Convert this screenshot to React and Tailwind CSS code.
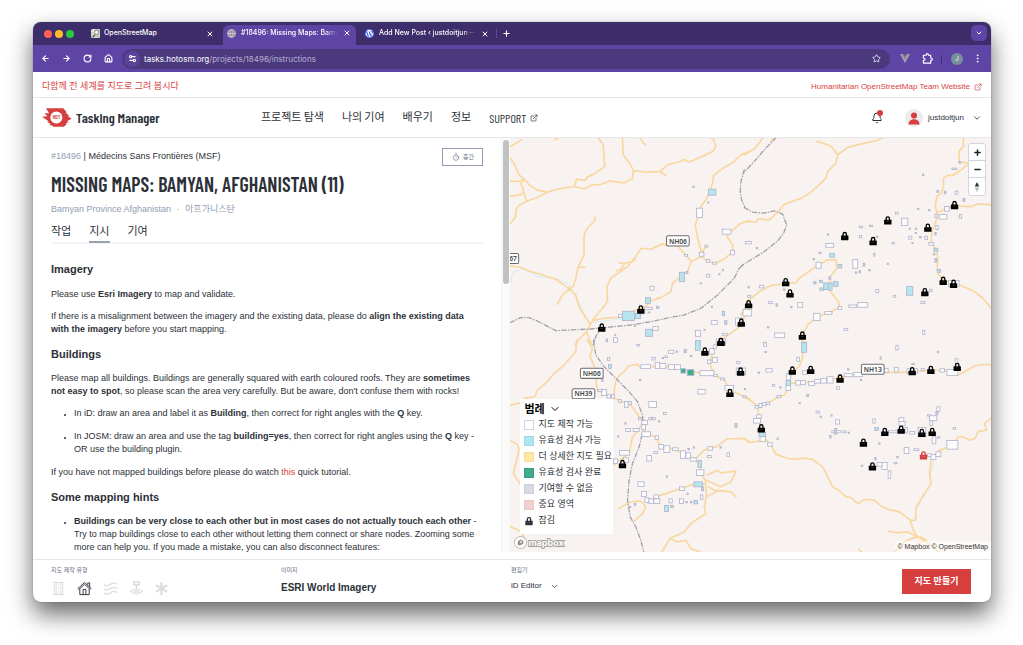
import { useState } from 'react';
import {
    ArrowLeft, ArrowRight, Bell, ChevronDown, EllipsisVertical, ExternalLink,
    Globe, House, Minus, Plus, RotateCw, Settings2, Star, Timer, X,
} from 'lucide-react';
import { FaAsterisk, FaWordpress } from 'react-icons/fa';

const BODY = 'font-["Liberation_Sans","Noto_Sans_CJK_KR",sans-serif]';
const CONDENSED = 'font-["Barlow_Condensed","Liberation_Sans_Narrow","Noto_Sans_CJK_KR",sans-serif]';
const BROWSER = 'font-[Inter,"Noto_Sans_CJK_KR",sans-serif]';

const LEGEND = [
    { label: '지도 제작 가능', swatch: 'bg-white border-gray-300' },
    { label: '유효성 검사 가능', swatch: 'bg-[#ade6ef] border-[#9fd8e3]' },
    { label: '더 상세한 지도 필요', swatch: 'bg-[#ffe8a0] border-[#f3dc94]' },
    { label: '유효성 검사 완료', swatch: 'bg-[#40ac8c] border-[#3a9c80]' },
    { label: '기여할 수 없음', swatch: 'bg-[#d8dae4] border-[#ccceda]' },
    { label: '중요 영역', swatch: 'bg-[#f0d1d0] border-[#e8c6c5]' },
];

// The map is drawn in four tiles, each with its own offset on the canvas.
// boxes: x, y, w, h, then b = ready for validation, g = finished
const TILES = [
    {
        dx: -18,
        dy: -9,
        water: 'M18 445L30 410L60 402L100 425L150 430L190 445L210 475L228 510L245 550M270 562L340 553L400 545L440 530',
        roads: [
            'M18 36L35 26L52 16M152 16L163 9M408 9L414 20L424 30',
            'M283 9L297 30L299 60L302 95L270 118L250 126L245 137L218 133L210 155',
            'M355 9L357 60L378 88L388 108L384 132L360 144L340 142L318 138L290 149L265 150L240 162L210 155L165 162L130 172L100 188L66 200L45 212L36 225L35 245L20 265',
            'M18 68L32 90L45 120L62 134L75 150L100 166L130 172M18 138L40 140L62 134L50 147L55 155L60 175L68 200M18 184L50 180L58 170',
            'M388 108L430 112L468 110L485 122M468 110L490 90L530 80L540 74L555 82L600 62L625 50L635 35L628 15L620 9',
            'M735 50L710 60L690 80L660 98L628 122L625 145L618 165L608 190L590 215L580 250L573 270L580 310L592 350L592 365',
            'M735 257L710 265L680 290L668 305L685 330L684 352L660 372L632 386L610 378L592 365L561 380M592 355L606 334',
            'M521 335L545 360L561 380L550 410L505 445L500 470L470 488L440 497L425 515',
            'M490 333L475 327L440 343L412 340L398 360L390 378L362 385L345 384M362 385L350 403L338 408M390 370L370 395L320 430L309 455L310 500L295 520L270 550L258 570',
            'M274 247L270 260L250 280L240 300L240 360L222 397L215 430L208 453L196 462L175 480L160 508M222 397L243 397',
            'M18 393L50 397L70 407L110 418L155 433L196 462L215 480L220 500L230 525L250 555L258 570L248 590L225 612L213 630M248 590L256 615L265 630',
            'M265 557L300 550L350 546L395 525L425 515M735 520L700 580L655 612L650 630',
        ],
        borders: 'M18 563L50 548L75 548L100 558L155 587L260 582L380 570L440 560L500 547L540 540L590 520L640 480L670 450L690 430L705 400L720 387M720 105L710 140L708 170L712 195L722 218M292 575L275 605L268 630',
        boxes: [
            [613, 163, 22, 18, 'b'], [577, 220, 18, 28], [654, 283, 26, 15], [585, 352, 14, 12], [679, 346, 12, 14],
            [607, 374, 10, 8], [625, 382, 11, 6], [541, 359, 9, 5], [602, 331, 9, 6], [526, 412, 15, 28, 'b'],
            [437, 454, 12, 12], [424, 488, 15, 17, 'b'], [355, 529, 36, 28, 'b'], [394, 535, 15, 16, 'b'], [343, 538, 11, 9],
            [420, 517, 25, 7], [457, 514, 7, 6, 'b'], [424, 583, 21, 21, 'b'], [446, 575, 17, 11], [574, 586, 15, 18],
            [575, 617, 14, 13, 'b'], [607, 418, 10, 8], [621, 557, 18, 11], [654, 529, 7, 13, 'b'], [661, 557, 7, 11, 'b'],
            [655, 595, 14, 6], [694, 549, 18, 22], [636, 612, 28, 17], [328, 608, 12, 14], [306, 612, 4, 8], [566, 154, 4, 4],
            [611, 201, 3, 4], [644, 416, 3, 4], [655, 404, 3, 4], [588, 444, 4, 3], [546, 410, 5, 6], [391, 571, 3, 4],
            [432, 531, 5, 3], [621, 514, 4, 3], [599, 583, 4, 3], [332, 598, 3, 4],
        ],
        locks: [[410, 523], [293, 577], [711, 562], [650, 620]],
    },
    {
        dx: 702,
        dy: -9,
        water: '',
        roads: [
            'M0 60L30 42L45 25L55 9M80 20L90 9',
            'M218 20L245 28L262 37L280 60L275 85L250 110L245 130L222 152L200 172L172 190L120 208L100 232L75 255L40 252L35 262L15 260L0 262',
            'M280 60L310 38L360 25L395 18L415 9',
            'M656 9L657 35L643 50L645 82L672 85M680 82L650 105L625 122L610 122L597 130L597 155L590 175L577 185L572 212L580 245L562 290L560 320L575 345L580 370L578 400L582 420L596 435L645 450L690 470L715 490L740 520',
            'M580 232L605 222L630 212L680 216L700 207L740 210',
            'M-10 540L15 495L45 470L80 452L125 445L155 443L165 430L222 390L250 375L275 375L277 400L258 425L258 470L282 500L285 518L250 535L218 545L190 570L175 600L174 640',
        ],
        borders: 'M95 9L60 45L30 80L0 112M0 218L25 232L60 235L90 228L115 238L127 270L118 295L100 318L60 350L-8 392',
        boxes: [
            [471, 250, 19, 22], [453, 232, 8, 6], [345, 274, 9, 5], [375, 271, 9, 4], [345, 302, 7, 7], [442, 322, 8, 5],
            [244, 326, 24, 11], [256, 356, 14, 11, 'b'], [215, 382, 15, 18], [281, 389, 11, 10, 'b'], [325, 374, 15, 26],
            [356, 385, 5, 9], [388, 355, 3, 9], [267, 440, 14, 14, 'b'], [238, 444, 13, 20, 'b'], [253, 444, 10, 22, 'b'],
            [225, 436, 9, 7, 'b'], [208, 440, 7, 7, 'b'], [226, 459, 12, 7, 'b'], [253, 426, 6, 7, 'b'], [281, 515, 11, 8],
            [313, 510, 24, 7], [340, 503, 30, 14], [241, 530, 22, 8], [208, 535, 19, 22], [160, 503, 15, 14], [73, 500, 11, 6],
            [95, 506, 4, 8], [91, 594, 30, 14], [46, 451, 12, 8], [10, 481, 9, 6], [-4, 524, 26, 19], [3, 320, 18, 7],
            [486, 455, 19, 26, 'b'], [555, 463, 8, 6], [394, 464, 9, 9], [446, 481, 8, 6], [529, 500, 12, 6], [534, 586, 7, 12],
            [299, 580, 11, 6], [612, 437, 32, 17], [584, 239, 23, 14], [600, 215, 14, 14], [644, 239, 7, 11], [655, 191, 6, 9],
            [632, 169, 8, 9], [599, 169, 5, 8], [622, 100, 15, 4], [577, 167, 5, 6], [571, 238, 7, 10], [574, 272, 7, 12],
            [553, 323, 14, 8], [541, 304, 8, 10], [493, 304, 9, 9], [568, 340, 12, 9, 'b'], [571, 371, 6, 11], [578, 404, 10, 8, 'b'],
            [571, 293, 4, 7], [172, 622, 14, 10, 'b'], [58, 622, 7, 8], [534, 118, 4, 4], [643, 80, 5, 5], [519, 221, 4, 3],
            [552, 224, 4, 4], [494, 280, 4, 3], [512, 280, 4, 4], [512, 293, 4, 3], [525, 305, 5, 4], [502, 323, 4, 3],
            [249, 297, 4, 4], [224, 352, 6, 4], [206, 371, 4, 4], [333, 411, 4, 4], [344, 407, 4, 7], [373, 404, 4, 4],
            [428, 385, 4, 4], [117, 462, 5, 4], [139, 514, 4, 4], [36, 338, 4, 4], [11, 455, 4, 4], [69, 575, 5, 4], [395, 304, 5, 4], [567, 356, 4, 4],
        ],
        locks: [[430, 256], [301, 303], [386, 318], [630, 210], [550, 278], [124, 441], [137, 475], [13, 507], [541, 471], [596, 437], [627, 446], [174, 601]],
    },
    {
        dx: -18,
        dy: 606,
        water: '',
        roads: [
            'M218 0L215 35L180 75L148 103L125 130L100 150L93 170L60 175M18 195L50 188M18 300L42 315L45 330L38 360L28 400L48 430M18 558L48 572L60 590',
            'M250 0L265 25L258 50L272 82L275 105L278 145L298 160L325 172L350 182L380 195L405 230L420 240L422 275L455 292L470 318L500 325L540 340L572 358L588 375L590 400L603 420L607 465L600 500L605 520L560 550L540 575L497 595L485 615L470 640',
            'M328 168L335 125L345 107L360 95L372 78L385 75L400 73L405 80L430 80L520 80L540 92L600 100L630 105L660 120L678 150L700 160L735 175',
            'M420 240L400 275L385 290L375 340L340 365L330 375M572 358L600 330L640 318L668 296L690 296L720 295L735 305',
            'M607 405L640 390L650 398L695 393L680 425L650 440L605 420M612 440L630 450L660 453L680 455L695 470M607 470L645 450',
            'M343 505L380 485L410 483L425 500L415 520L390 543M430 487L455 470L500 455L560 435L600 432',
            'M497 595L520 605L545 600L560 625L590 636M630 105L618 75L625 30L650 5',
        ],
        borders: 'M268 0L275 45L300 80L340 120L375 155L400 185L415 225L418 265L405 320L385 370L375 420L370 480L378 530L395 560L410 600L420 640',
        boxes: [
            [574, 2, 14, 29, 'b'], [493, 31, 16, 9], [410, 74, 29, 11], [453, 67, 14, 18], [467, 70, 18, 15], [493, 74, 18, 14],
            [511, 74, 18, 14], [530, 86, 14, 13, 'g'], [549, 89, 20, 17, 'g'], [587, 92, 42, 15], [662, 136, 26, 14], [581, 148, 22, 14],
            [434, 184, 23, 18], [292, 148, 15, 18], [309, 164, 10, 10], [322, 164, 9, 10], [344, 178, 7, 9], [361, 184, 11, 18],
            [374, 184, 8, 10], [413, 241, 17, 12], [413, 253, 11, 15], [387, 265, 18, 9], [365, 265, 14, 9], [413, 275, 26, 14],
            [453, 287, 10, 11], [464, 313, 14, 14], [479, 317, 18, 20], [505, 323, 17, 8], [529, 332, 15, 23], [545, 338, 14, 17],
            [428, 346, 14, 17], [346, 331, 30, 14], [358, 353, 15, 14], [328, 356, 12, 14], [611, 320, 14, 10], [610, 346, 11, 6],
            [668, 338, 8, 11], [581, 361, 11, 21, 'b'], [577, 389, 22, 17], [569, 425, 26, 15, 'b'], [401, 425, 19, 14], [412, 454, 15, 15],
            [449, 464, 14, 11], [434, 476, 14, 14], [449, 476, 18, 14], [422, 473, 12, 14], [526, 440, 15, 11], [589, 464, 7, 14],
            [592, 440, 6, 12], [569, 481, 11, 10, 'b'], [526, 476, 12, 14], [481, 496, 12, 18, 'b'], [499, 496, 9, 6, 'b'], [313, 73, 9, 12, 'b'],
            [310, 52, 7, 9], [625, 52, 14, 15], [616, 26, 14, 16], [628, 14, 8, 12], [610, 60, 10, 10], [540, 28, 6, 10], [443, 52, 10, 8],
            [697, 64, 10, 6], [692, 250, 6, 12], [478, 217, 8, 6], [434, 232, 8, 7], [445, 232, 8, 7], [403, 232, 8, 7], [449, 334, 11, 6],
            [551, 325, 5, 4], [494, 476, 10, 12], [558, 353, 18, 10], [649, 114, 12, 6], [628, 104, 12, 6], [716, 167, 9, 6], [696, 84, 28, 20],
            [406, 118, 4, 4], [293, 112, 4, 12], [482, 48, 8, 5], [474, 52, 4, 4], [398, 13, 8, 5], [516, 33, 4, 4], [559, 46, 4, 4],
            [362, 248, 4, 4], [340, 287, 4, 4], [463, 242, 4, 4], [486, 407, 4, 4], [548, 459, 4, 4], [545, 484, 4, 4], [559, 484, 4, 4],
            [567, 320, 4, 4], [647, 320, 4, 4], [376, 498, 4, 4], [280, 148, 14, 6], [720, 145, 4, 4], [390, 490, 5, 5],
        ],
        locks: [[602, 34], [650, 5], [709, 94], [677, 158], [355, 371]],
    },
    {
        dx: 702,
        dy: 606,
        water: 'M568 362L563 385L556 410L560 430L545 455L530 480L520 500',
        roads: [
            'M175 0L175 50L165 80L140 100L135 140L120 165L100 172L70 190L40 200L20 182L0 170',
            'M135 130L220 125L290 112L350 98L440 97L500 97L560 90L620 93L640 105L660 95L690 78L705 74L740 74',
            'M40 200L45 240L48 270L60 295L78 312L95 342L130 355L155 357L180 354L205 358L235 380L265 440L285 452L305 470L320 472L340 490L360 478L390 480L410 498L430 507L465 515L497 540L505 565L515 585L545 605L585 636',
            'M0 295L15 307L45 303L60 295M497 540L513 540L515 500L540 460L560 430L555 400L560 360L585 330L630 315L640 290L655 290L675 300L692 295L700 275L725 270L720 250L740 235',
            'M433 573L455 577L490 575L520 590L500 595L480 605L450 636M530 590L545 600L520 610L500 636M344 627L352 636',
        ],
        borders: '',
        boxes: [
            [172, 8, 15, 29, 'b'], [157, 52, 8, 12], [65, 86, 19, 10], [58, 8, 8, 11], [175, 92, 12, 11], [125, 121, 14, 15, 'b'],
            [127, 100, 12, 20], [125, 137, 14, 14], [154, 121, 15, 14], [169, 121, 14, 12], [193, 124, 18, 12], [211, 118, 18, 11],
            [229, 115, 18, 14], [248, 110, 18, 19], [299, 101, 26, 9], [328, 97, 26, 13], [416, 86, 15, 11], [450, 82, 11, 14],
            [488, 86, 31, 14], [530, 85, 9, 6], [586, 86, 14, 10], [607, 88, 33, 18], [632, 56, 8, 14], [454, 16, 7, 14], [407, 50, 3, 8],
            [84, 133, 7, 6], [187, 163, 6, 6], [98, 166, 11, 7], [66, 186, 10, 8], [55, 188, 10, 8], [44, 190, 9, 12], [32, 196, 10, 8],
            [37, 224, 14, 10], [28, 235, 21, 14], [44, 277, 20, 12, 'b'], [47, 290, 17, 14], [70, 308, 14, 10], [215, 213, 11, 6],
            [274, 239, 11, 13], [262, 272, 9, 6], [271, 265, 6, 17], [277, 272, 12, 6], [295, 272, 9, 6], [277, 140, 8, 8], [385, 236, 7, 13],
            [391, 262, 11, 9, 'b'], [432, 272, 28, 6], [463, 233, 15, 11], [464, 244, 18, 12], [482, 262, 7, 16], [496, 274, 15, 8],
            [521, 262, 23, 28], [555, 227, 22, 15], [577, 200, 9, 14], [574, 214, 6, 10], [556, 242, 8, 14], [563, 290, 11, 21],
            [607, 301, 33, 26], [559, 343, 15, 15], [574, 335, 15, 14], [548, 341, 12, 8], [479, 322, 14, 18], [508, 326, 15, 5],
            [412, 367, 16, 21], [398, 367, 15, 11], [431, 392, 8, 23], [626, 262, 7, 6], [391, 352, 4, 7], [449, 367, 8, 4],
            [256, 286, 4, 8], [578, 290, 8, 4], [549, 224, 8, 4], [62, 34, 4, 4], [41, 96, 5, 4], [98, 294, 4, 4], [106, 140, 4, 4],
            [164, 188, 4, 3], [227, 228, 4, 4], [260, 224, 3, 4], [311, 276, 4, 4], [348, 118, 4, 4], [309, 86, 5, 4], [403, 308, 4, 4],
            [457, 349, 4, 4], [351, 375, 4, 4], [578, 34, 4, 4], [502, 70, 7, 4],
        ],
        locks: [[144, 91], [199, 89], [287, 115], [503, 93], [559, 89], [638, 80], [51, 264], [421, 275], [470, 268], [532, 278], [563, 275], [357, 307], [384, 378], [537, 345, 'mine']],
    },
];

const ROUTES = [
    { label: 'NH06', x: 503, y: 309 },
    { label: '67', x: 9, y: 362 },
    { label: 'NH06', x: 245, y: 706 },
    { label: 'NH39', x: 220, y: 767 },
    { label: 'NH13', x: 1087, y: 694 },
];

const BOX_FILL = { b: '#b5e5ee', g: '#40ac8c' };

const Lock = ({ x, y, color = '#000' }) => (
    <g transform={`translate(${x} ${y})`}>
        <path d="M-5 1v-6a5 5 0 0 1 10 0v6" fill="none" stroke={color} strokeWidth="4" />
        <rect x="-11" y="-1" width="22" height="14" rx="1" fill={color} />
        <path d="M-4 4h8" stroke="#fff" strokeWidth="1" opacity=".5" />
    </g>
);

const MapCanvas = () => (
    <svg viewBox="0 0 1440 1242" preserveAspectRatio="xMidYMid slice" className="absolute inset-0 h-full w-full" aria-hidden="true">
        <rect width="1440" height="1242" fill="#f8f3f1" />
        {TILES.map((tile, i) => (
            <g key={i} transform={`translate(${tile.dx} ${tile.dy})`} fill="none" strokeLinejoin="round" strokeLinecap="round">
                <path d={tile.water} stroke="#dbe8ef" strokeWidth="3" />
                <path d={tile.roads.join('')} stroke="#f8d7a0" strokeWidth="5" />
                <path d={tile.borders} stroke="#a3a2ab" strokeWidth="4" strokeDasharray="13 7 1 7" />
            </g>
        ))}
        {TILES.map((tile, i) => (
            <g key={i} transform={`translate(${tile.dx} ${tile.dy})`}>
                {tile.boxes.map(([x, y, w, h, kind], j) => (
                    <rect key={j} x={x} y={y} width={w} height={h} fill={BOX_FILL[kind] || (w > 6 ? '#fdfcfd' : '#cfd2e2')} stroke="#b1b4cd" strokeWidth="2.5" />
                ))}
            </g>
        ))}
        {ROUTES.map(({ label, x, y }) => (
            <g key={`${label}-${x}`}>
                <rect x={x - label.length * 8.5} y={y - 15} width={label.length * 17} height="30" rx="5" fill="#fff" stroke="#6b6b70" strokeWidth="3" />
                <text x={x} y={y + 8} textAnchor="middle" fontFamily="Noto Sans, sans-serif" fontWeight="600" fontSize="20" fill="#3c3c40">{label}</text>
            </g>
        ))}
        {TILES.map((tile, i) => (
            <g key={i} transform={`translate(${tile.dx} ${tile.dy})`}>
                {tile.locks.map(([x, y, mine]) => (
                    <Lock key={`${x}-${y}`} x={x} y={y} color={mine ? '#d73f3f' : '#000'} />
                ))}
            </g>
        ))}
    </svg>
);

const HotLogo = () => (
    <svg viewBox="0 0 90 56" className="h-[19px] w-[30px] shrink-0" aria-hidden="true">
        <path d="M12 0h52l10 12-3 2 10 8-3 2 11 8-14 7 5 3-9 4 3 3-9 7H34l-5-5h-6l2-4-10-6 5-2L0 26l16-2-9-9h14z" fill="#d73f3f" />
        <circle cx="43" cy="28" r="18" fill="#fff" />
        <text x="43" y="34" textAnchor="middle" fontFamily="Barlow Condensed, Liberation Sans Narrow, sans-serif" fontWeight="600" fontSize="17" fill="#d73f3f">HOT</text>
    </svg>
);

const MapFavicon = () => (
    <svg viewBox="0 0 16 16" className="size-[9px] shrink-0" aria-hidden="true">
        <rect width="16" height="16" rx="2" fill="#c9d3bb" />
        <path d="M0 5L9 3L16 9M3 16L9 3M5 0v16" stroke="#f2efe6" strokeWidth="2" fill="none" />
        <circle cx="10" cy="6" r="4" fill="#eef1f5" stroke="#73777e" strokeWidth="1.5" />
        <path d="M7 10l-4 5" stroke="#3d3d3d" strokeWidth="2" />
    </svg>
);

const ExtensionsIcon = () => (
    <svg viewBox="0 0 24 24" className="size-[11px]" fill="none" stroke="currentColor" strokeWidth="2.5" strokeLinejoin="round" aria-hidden="true">
        <path d="M3 5h6V4a2.500 2.500 0 0 1 5 0v1h5v6h1a2.500 2.500 0 0 1 0 5h-1v6H3v-6h1a2.500 2.500 0 0 0 0-5H3z" />
    </svg>
);

const BrowserTabs = () => (
    <div className="flex h-[23px] items-end bg-[#3e2d6b] pr-1 text-[7px] font-medium text-white">
        <div className="flex h-full w-[58px] items-center gap-[3px] pl-[11px]">
            <span className="size-2 rounded-full bg-[#fe5f57]" />
            <span className="size-2 rounded-full bg-[#febb2e]" />
            <span className="size-2 rounded-full bg-[#28c840]" />
        </div>
        <div className="flex h-full w-[132px] items-center gap-1 pr-[9px]">
            <MapFavicon />
            <span className="flex-1 truncate">OpenStreetMap</span>
            <button type="button" aria-label="Close tab"><X strokeWidth={3} className="size-2" /></button>
        </div>
        <div className="flex h-5 w-[133px] items-center gap-[5px] rounded-t-md bg-[#5e44a5] pr-[5px] pb-1 pl-1">
            <Globe className="size-[9px] shrink-0 rounded-full bg-[#8c8797] text-[#d4d0dc]" />
            <span className="flex-1 overflow-hidden mask-r-from-85% whitespace-nowrap">#18496: Missing Maps: Bamyan</span>
            <button type="button" aria-label="Close tab"><X strokeWidth={3} className="size-2" /></button>
        </div>
        <div className="flex h-full w-[140px] items-center gap-[5px] pr-[7px] pl-[9px]">
            <FaWordpress className="size-[9px] shrink-0 rounded-full bg-[#3858e9]" />
            <span className="flex-1 overflow-hidden mask-r-from-85% whitespace-nowrap">Add New Post ‹ justdoitjun —</span>
            <button type="button" aria-label="Close tab"><X strokeWidth={3} className="size-2" /></button>
        </div>
        <div className="flex h-full items-center gap-[5px]">
            <span className="h-[9px] w-px bg-[#5e44a5]" />
            <button type="button" aria-label="New tab"><Plus strokeWidth={3} className="size-[9px]" /></button>
        </div>
        <button type="button" aria-label="Search tabs" className="mb-1 ml-auto flex size-4 items-center justify-center rounded-[5px] bg-[#5e44a5]">
            <ChevronDown strokeWidth={3} className="size-2" />
        </button>
    </div>
);

const BrowserToolbar = () => (
    <div className="flex h-[27px] items-center bg-[#5e44a5] pr-2 pl-2 text-white">
        <div className="flex w-[81px] items-center gap-3">
            <button type="button" aria-label="Back"><ArrowLeft strokeWidth={3} className="size-[9px]" /></button>
            <button type="button" aria-label="Forward"><ArrowRight strokeWidth={3} className="size-[9px]" /></button>
            <button type="button" aria-label="Reload"><RotateCw strokeWidth={3} className="size-[9px]" /></button>
            <button type="button" aria-label="Home"><House strokeWidth={3} className="size-[9px]" /></button>
        </div>
        <div className="flex h-5 flex-1 items-center gap-1 rounded-full bg-[#4b397e] pr-[9px] pl-[2px]">
            <button type="button" aria-label="Site information" className="flex size-4 items-center justify-center rounded-full bg-[#5a4499]">
                <Settings2 strokeWidth={3} className="size-[9px]" />
            </button>
            <div className="flex-1 text-[8px] text-[#b9b0d0]">
                <span className="text-white">tasks.hotosm.org</span>/projects/18496/instructions
            </div>
            <button type="button" aria-label="Bookmark"><Star className="size-[9px]" /></button>
        </div>
        <div className="ml-[10px] flex items-center">
            <svg viewBox="0 0 20 18" className="h-[9px] w-[10px]" aria-hidden="true">
                <path d="M0 0h7l3 6 3-6h7L10 18z" fill="#a6a3ac" />
                <path d="M4 0h3l3 6 3-6h3l-6 11z" fill="#858190" />
            </svg>
            <button type="button" aria-label="Extensions" className="ml-3"><ExtensionsIcon /></button>
            <span className="ml-2 h-2 w-px bg-[#3e2d6b]" />
            <span className="ml-[9px] flex size-3 items-center justify-center rounded-full bg-[#78909c] text-[6px]">J</span>
            <button type="button" aria-label="Menu" className="ml-[9px]"><EllipsisVertical className="size-[11px]" /></button>
        </div>
    </div>
);

const SiteHeader = () => (
    <header className="text-[#2c3038]">
        <div className="flex h-[26px] items-center justify-between border-b border-gray-200 px-[9px] pt-1 text-[9px] text-[#d73f3f]">
            <span>다함께 전 세계를 지도로 그려 봅시다</span>
            <a href="#hot" className="flex items-center gap-1 text-[8px]">
                Humanitarian OpenStreetMap Team Website
                <ExternalLink className="size-2" />
            </a>
        </div>
        <div className="flex h-10 items-center border-b border-gray-200 px-[9px]">
            <a href="#home" className="flex w-[219px] items-center gap-1">
                <HotLogo />
                <span className={`${CONDENSED} text-[14px] font-semibold whitespace-nowrap`}>Tasking Manager</span>
            </a>
            <nav className={`${CONDENSED} flex items-center gap-[18px] text-[11px] whitespace-nowrap`}>
                <a href="#explore">프로젝트 탐색</a>
                <a href="#contributions">나의 기여</a>
                <a href="#learn">배우기</a>
                <a href="#about">정보</a>
                <a href="#support" className="flex items-center gap-1 text-[12px]">SUPPORT <ExternalLink className="size-2" /></a>
            </nav>
            <div className="ml-auto flex items-center text-[8px]">
                <button type="button" aria-label="Notifications" className="relative">
                    <Bell className="size-3" />
                    <span className="absolute -top-[2px] right-0 size-[6px] rounded-full bg-[#d73f3f]" />
                </button>
                <button type="button" className="ml-[22px] flex items-center">
                    <svg viewBox="0 0 18 18" className="size-[18px]" aria-hidden="true">
                        <circle cx="9" cy="9" r="9" fill="#ececec" />
                        <circle cx="9" cy="6.5" r="3" fill="#d73f3f" />
                        <path d="M3.5 15.5c0-7 11-7 11 0z" fill="#d73f3f" />
                    </svg>
                    <span className="ml-[5px]">justdoitjun</span>
                    <ChevronDown className="ml-2 size-[10px]" />
                </button>
            </div>
        </div>
    </header>
);

const Instructions = () => (
    <article className="text-[9px] leading-[13px]">
        <h3 className="mb-[11px] text-[11px] leading-[15px] font-bold">Imagery</h3>
        <p className="mb-[9px]">Please use <strong>Esri Imagery</strong> to map and validate.</p>
        <p className="mb-[9px]">
            If there is a misalignment between the imagery and the existing data, please do <strong>align the existing data with the imagery</strong> before you start mapping.
        </p>
        <h3 className="mt-[11px] mb-[10px] text-[11px] leading-[15px] font-bold">Buildings</h3>
        <p className="mb-[9px]">
            Please map all buildings. Buildings are generally squared with earth coloured roofs. They are <strong>sometimes not easy to spot</strong>, so please scan the area very carefully. But be aware, don't confuse them with rocks!
        </p>
        <ul className="list-disc pl-[23px] marker:text-[6px]">
            <li className="mb-[10px]">In iD: draw an area and label it as <strong>Building</strong>, then correct for right angles with the <strong>Q</strong> key.</li>
            <li className="mb-[10px]">In JOSM: draw an area and use the tag <strong>building=yes</strong>, then correct for right angles using the <strong>Q</strong> key - OR use the building plugin.</li>
        </ul>
        <p className="mb-[9px]">If you have not mapped buildings before please do watch <a href="#tutorial" className="text-[#d73f3f]">this</a> quick tutorial.</p>
        <h3 className="mt-[11px] mb-[10px] text-[11px] leading-[15px] font-bold">Some mapping hints</h3>
        <ul className="list-disc pl-[23px] marker:text-[6px]">
            <li>
                <strong>Buildings can be very close to each other but in most cases do not actually touch each other</strong> - Try to map buildings close to each other without letting them connect or share nodes. Zooming some more can help you. If you made a mistake, you can also disconnect features:
            </li>
        </ul>
    </article>
);

const ProjectPanel = () => {
    const [tab, setTab] = useState('지시');

    return (
        <section className="w-[49%] shrink-0 overflow-hidden border-r border-gray-100 pt-[10px] pr-[18px] pl-[18px] text-[#2c3038]">
            <div className="flex h-[18px] items-center justify-between">
                <p className="text-[9px]"><a href="#project" className="text-[#929db3]">#18496</a> | Médecins Sans Frontières (MSF)</p>
                <span className="flex h-[18px] w-[41px] items-center justify-center gap-[3px] border border-[#929db3] text-[6px] text-[#68707f]">
                    <Timer className="size-2" />중간
                </span>
            </div>
            <h1 className={`${CONDENSED} mt-[6px] text-[20px] leading-6 font-semibold whitespace-nowrap uppercase`}>Missing Maps: Bamyan, Afghanistan (11)</h1>
            <p className="mt-[6px] text-[9px] leading-[14px] text-[#929db3]">Bamyan Province Afghanistan <span className="mx-[3px]">·</span> 아프가니스탄</p>
            <div className="mt-[5px] mb-[18px] flex h-[23px] gap-[18px] border-b-2 border-gray-100">
                {['작업', '지시', '기여'].map((name) => (
                    <button
                        key={name}
                        type="button"
                        onClick={() => setTab(name)}
                        className={`-mb-px h-[22px] border-b-2 text-[11px] leading-5 ${tab === name ? 'border-gray-400' : 'border-transparent'}`}
                    >
                        {name}
                    </button>
                ))}
            </div>
            <Instructions />
        </section>
    );
};

const Legend = () => (
    <div className="absolute bottom-[18px] left-[10px] w-[93px] bg-white px-1 pt-[2px] pb-[5px] text-[9px] text-[#2c3038]">
        <button type="button" className="flex h-4 items-center gap-1 text-[11px] font-bold text-black">
            범례 <ChevronDown className="size-3" />
        </button>
        <ul>
            {LEGEND.map(({ label, swatch }) => (
                <li key={label} className="flex h-4 items-center gap-1 whitespace-nowrap">
                    <span className={`size-[10px] shrink-0 border ${swatch}`} />
                    {label}
                </li>
            ))}
            <li className="flex h-4 items-center gap-1">
                <svg viewBox="-15 -15 30 30" className="size-[10px]" aria-hidden="true"><Lock x={0} y={0} color="#2c3038" /></svg>
                잠김
            </li>
        </ul>
    </div>
);

const ProjectMap = () => (
    <section className="relative min-w-0 flex-1 overflow-hidden bg-[#f8f3f1]">
        <MapCanvas />
        <div className="absolute top-[5px] right-[5px] flex w-[18px] flex-col divide-y divide-gray-300 rounded-[3px] border border-gray-300 bg-white text-[#222]">
            <button type="button" aria-label="Zoom in" className="flex h-[17px] items-center justify-center"><Plus strokeWidth={4} className="size-[9px]" /></button>
            <button type="button" aria-label="Zoom out" className="flex h-[17px] items-center justify-center"><Minus strokeWidth={4} className="size-[9px]" /></button>
            <button type="button" aria-label="Reset bearing" className="flex h-[17px] items-center justify-center">
                <svg viewBox="0 0 10 18" className="h-[10px] w-[6px]" aria-hidden="true">
                    <path d="M5 0l4 8H1z" fill="#333" />
                    <path d="M5 18l4-8H1z" fill="#bbb" />
                </svg>
            </button>
        </div>
        <Legend />
        <div className="absolute bottom-[3px] left-1 flex items-center gap-px font-[Inter,sans-serif] text-[9px] leading-3 font-bold text-white [-webkit-text-stroke:2px_#a3a09e] [paint-order:stroke_fill]">
            <svg viewBox="0 0 24 24" className="size-[13px]" aria-hidden="true">
                <circle cx="12" cy="12" r="10.5" fill="#fff" stroke="#8f8d8c" strokeWidth="2" />
                <path d="M7 17c-1-7 2-10 6-10 6 0 6 8 1 9-2 1-5 1-7 1z" fill="#8f8d8c" />
                <path d="M13 8l1 2 2 1-2 1-1 2-1-2-2-1 2-1z" fill="#fff" />
            </svg>
            mapbox
        </div>
        <p className="absolute right-0 bottom-0 bg-white/50 px-[3px] text-[7px] leading-[11px] text-[#333]">© Mapbox © OpenStreetMap</p>
    </section>
);

const MappingTypes = () => (
    <div className="mt-[6px] flex items-center gap-[11px] text-[#dcdcdc]">
        <svg viewBox="0 0 16 16" className="size-[15px]" fill="none" stroke="currentColor" aria-hidden="true">
            <path d="M3.500 1.500h2v13h-2zM10.500 1.500h2v13h-2zM2 1.500h12M2 14.500h12M8 3v2M8 7v2M8 11v2" />
        </svg>
        <svg viewBox="0 0 16 16" className="size-[15px] text-[#2c3038]" fill="none" stroke="currentColor" strokeLinejoin="round" aria-hidden="true">
            <path d="M1 8L8 1.500L15 8L14 9L8 3.500L2 9zM3 8.500V14.500H13V8.500M6.500 14.500V9H9.500V14.500M11.500 4V2H13.500V6.500" />
        </svg>
        <svg viewBox="0 0 16 16" className="size-[15px]" fill="none" stroke="currentColor" strokeWidth="1.300" aria-hidden="true">
            <path d="M1 4c3 2 5 1 7-.5S13 2 15 3.500M1 8.500c3 2 5 1 7-.5s5-1.500 7 0M1 13c3 2 5 1 7-.5s5-1.500 7 0" />
        </svg>
        <svg viewBox="0 0 16 16" className="size-[15px]" fill="none" stroke="currentColor" aria-hidden="true">
            <path d="M5 1h6v3H5zM8 4v6" strokeWidth="1.500" />
            <path d="M1 11l5-2h4l5 2-7 3.500zM4 10l7 3M12 10l-7 3" />
        </svg>
        <FaAsterisk className="size-[13px]" />
    </div>
);

const ProjectFooter = () => (
    <footer className="mt-[7px] flex h-[43px] shrink-0 border-t border-gray-200 pr-5 pl-[18px] text-[#2c3038]">
        <div className="flex-[230] pt-[6px]">
            <h4 className="text-[6px] leading-[9px] text-[#68707f]">지도 제작 유형</h4>
            <MappingTypes />
        </div>
        <div className="flex-[230] pt-[6px]">
            <h4 className="text-[6px] leading-[9px] text-[#68707f]">이미지</h4>
            <p className="mt-[6px] text-[10px] leading-[14px] font-bold">ESRI World Imagery</p>
        </div>
        <div className="flex flex-[460] items-start justify-between">
            <div className="pt-[6px]">
                <label htmlFor="editor" className="block text-[6px] leading-[9px] text-[#68707f]">편집기</label>
                <div className="mt-[5px] flex items-center">
                    <select id="editor" className="w-[39px] appearance-none bg-transparent text-[8px] leading-3">
                        <option>iD Editor</option>
                    </select>
                    <ChevronDown className="size-[9px]" />
                </div>
            </div>
            <button type="button" className="mt-[9px] h-[25px] w-[69px] bg-[#d73f3f] text-[9px] font-bold text-white">지도 만들기</button>
        </div>
    </footer>
);

const App = () => (
    <div className={`${BODY} h-screen overflow-hidden bg-white pt-[22px] pr-8 pb-[43px] pl-[33px]`}>
        <div className="flex h-full flex-col overflow-hidden rounded-[8px] bg-white shadow-[0_12px_24px_rgba(0,0,0,0.6),0_0_1px_rgba(0,0,0,0.6)]">
            <div className={BROWSER}>
                <BrowserTabs />
                <BrowserToolbar />
            </div>
            <SiteHeader />
            <main className="flex min-h-0 flex-1">
                <ProjectPanel />
                <div className="w-2 shrink-0 bg-[#fafafa] px-px py-[2px]">
                    <div className="h-[144px] rounded-full bg-[#c1c1c1]" />
                </div>
                <ProjectMap />
            </main>
            <ProjectFooter />
        </div>
    </div>
);

export default App;
